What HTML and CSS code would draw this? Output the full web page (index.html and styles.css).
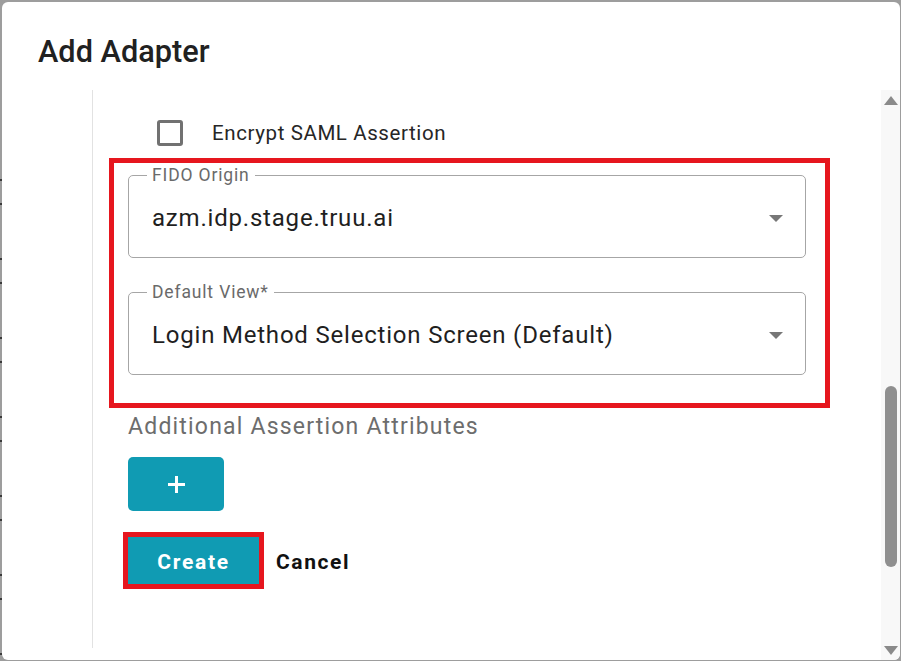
FILE: index.html
```html
<!DOCTYPE html>
<html lang="en">
<head>
<meta charset="utf-8">
<title>Add Adapter</title>
<link rel="stylesheet" href="styles.css">
</head>
<body>
<div class="backdrop">
  <div class="dialog">
    <header class="dialog-header">
      <h1 class="dialog-title">Add Adapter</h1>
    </header>
    <div class="dialog-body">
      <div class="gutter"></div>
      <div class="content">
        <label class="check-row">
          <span class="checkbox"></span>
          <span class="check-label">Encrypt SAML Assertion</span>
        </label>
        <div class="highlight">
          <fieldset class="select-field">
            <legend class="select-legend">FIDO Origin</legend>
            <div class="select-row">
              <span class="select-value">azm.idp.stage.truu.ai</span>
              <span class="select-arrow"></span>
            </div>
          </fieldset>
          <fieldset class="select-field">
            <legend class="select-legend">Default View*</legend>
            <div class="select-row">
              <span class="select-value">Login Method Selection Screen (Default)</span>
              <span class="select-arrow"></span>
            </div>
          </fieldset>
        </div>
        <div class="section-title">Additional Assertion Attributes</div>
        <button class="add-btn" type="button" aria-label="Add">
          <svg width="17" height="17" viewBox="0 0 17 17"><path d="M8.5 0v17M0 8.5h17" stroke="#fff" stroke-width="3"/></svg>
        </button>
        <div class="actions">
          <div class="create-outline">
            <button class="create-btn" type="button">Create</button>
          </div>
          <button class="cancel-btn" type="button">Cancel</button>
        </div>
      </div>
      <div class="scrollbar">
        <span class="sb-arrow sb-up"></span>
        <div class="sb-track">
          <div class="sb-thumb"></div>
        </div>
        <span class="sb-arrow sb-down"></span>
      </div>
    </div>
  </div>
</div>
</body>
</html>
```
FILE: styles.css
```css
* { box-sizing: border-box; }
html, body {
  margin: 0;
  padding: 0;
  width: 901px;
  height: 661px;
  overflow: hidden;
}
body {
  background: #9d9d9d;
  font-family: Roboto, "Liberation Sans", sans-serif;
}
.backdrop {
  height: 661px;
  padding: 2px 1px 1px 2px;
  background:
    repeating-linear-gradient(to bottom, transparent 0, transparent 12px, #3a3a3a 12px, #3a3a3a 14px, transparent 14px, transparent 36px, #3a3a3a 36px, #3a3a3a 38px, transparent 38px, transparent 79px) 0 167px / 2px 100% no-repeat,
    #9d9d9d;
}
.dialog {
  height: 658px;
  background: #fff;
  border-radius: 6px;
  display: flex;
  flex-direction: column;
  overflow: hidden;
}
.dialog-header {
  height: 88px;
  padding: 32px 0 0 36px;
  flex: none;
}
.dialog-title {
  margin: 0;
  font-size: 30.7px;
  line-height: 36px;
  font-weight: 500;
  color: #212121;
}
.dialog-body {
  flex: 1;
  display: flex;
  min-height: 0;
}
.gutter {
  width: 91px;
  flex: none;
  border-right: 1px solid #e2e2e2;
  margin-bottom: 12px;
}
.content {
  flex: 1;
  padding: 30px 0 0 35px;
  display: flex;
  flex-direction: column;
  align-items: flex-start;
}
.check-row {
  display: flex;
  align-items: center;
  height: 26px;
  padding-left: 29px;
  gap: 29px;
}
.checkbox {
  width: 26px;
  height: 26px;
  border: 3px solid #717171;
  border-radius: 3px;
}
.check-label {
  font-size: 20.5px;
  color: #262626;
  letter-spacing: 0.6px;
}
.highlight {
  margin: 12px 0 0 -19px;
  width: 721px;
  border: 5px solid #e6161e;
  padding: 2px 19px 28px 14px;
  display: flex;
  flex-direction: column;
  gap: 24px;
}
.select-field {
  margin: 0;
  padding: 0;
  border: 1px solid #a6a6a6;
  border-radius: 5px;
  min-width: 0;
  height: 93px;
}
.select-legend {
  margin-left: 18px;
  padding: 0 5px;
  font-size: 17.5px;
  line-height: 20px;
  color: #6a6a6a;
  letter-spacing: 0.85px;
}
.select-row {
  display: flex;
  align-items: center;
  justify-content: space-between;
  padding: 19px 22px 0 23px;
  height: 47px;
}
.select-value {
  font-size: 24px;
  line-height: 28px;
  color: #1f1f1f;
  letter-spacing: 0.8px;
}
.select-arrow {
  width: 0;
  height: 0;
  border-left: 7px solid transparent;
  border-right: 7px solid transparent;
  border-top: 7px solid #777;
}
.section-title {
  margin-top: 6px;
  font-size: 23px;
  line-height: 26px;
  color: #6d6d6d;
  letter-spacing: 1.2px;
}
.add-btn {
  margin-top: 17px;
  width: 96px;
  height: 54px;
  border: 0;
  border-radius: 5px;
  background: #109bb3;
  display: flex;
  align-items: center;
  justify-content: center;
  padding: 0;
}
.add-btn svg { display: block; }
.actions {
  margin: 21px 0 0 -5px;
  display: flex;
  align-items: center;
  gap: 12px;
}
.create-outline {
  border: 5px solid #e6161e;
}
.create-btn {
  display: block;
  width: 131px;
  height: 47px;
  border: 0;
  margin: 0;
  background: #109bb3;
  color: #fff;
  font-family: inherit;
  font-size: 21px;
  font-weight: 700;
  letter-spacing: 1.7px;
  padding: 2px 0 0;
}
.cancel-btn {
  border: 0;
  background: none;
  padding: 2px 0 0;
  font-family: inherit;
  font-size: 21px;
  font-weight: 700;
  letter-spacing: 1.6px;
  color: #111;
}
.scrollbar {
  width: 19px;
  flex: none;
  background: #f8f8f8;
  display: flex;
  flex-direction: column;
  align-items: center;
  padding: 6px 0 5px;
}
.sb-arrow {
  width: 0;
  height: 0;
  border-left: 7px solid transparent;
  border-right: 7px solid transparent;
}
.sb-up { border-bottom: 9px solid #8a8a8a; }
.sb-down { border-top: 9px solid #8a8a8a; }
.sb-track {
  flex: 1;
  width: 100%;
  display: flex;
  justify-content: center;
  padding-top: 281px;
}
.sb-thumb {
  width: 12px;
  height: 181px;
  border-radius: 6px;
  background: #8f8f8f;
}
```
